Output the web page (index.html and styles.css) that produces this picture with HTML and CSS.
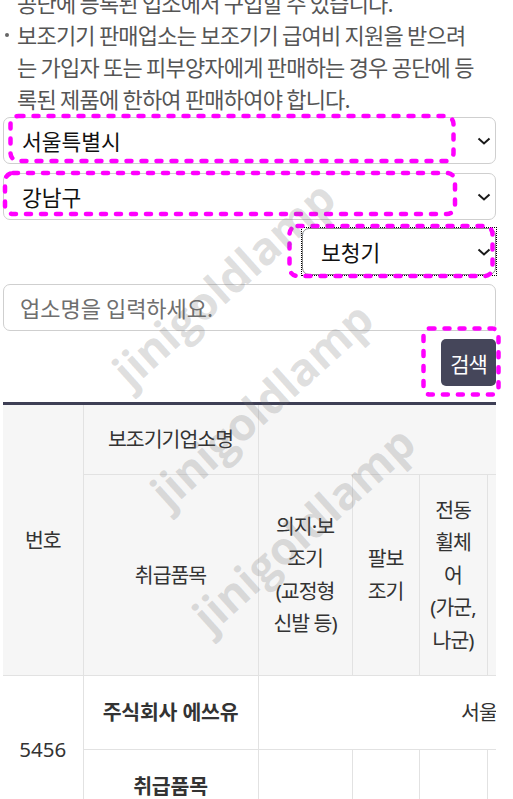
FILE: index.html
```html
<!DOCTYPE html>
<html>
<head>
<meta charset="utf-8">
<title>보조기기 판매업소 찾기</title>
<link rel="stylesheet" href="styles.css">
</head>
<body>
<div class="page">
  <p class="notice-cont">공단에 등록된 업소에서 구입할 수 있습니다.</p>
  <ul class="notice">
    <li>보조기기 판매업소는 보조기기 급여비 지원을 받으려는 가입자 또는 피부양자에게 판매하는 경우 공단에 등록된 제품에 한하여 판매하여야 합니다.</li>
  </ul>

  <form class="search">
    <div class="select-wrap">
      <select class="select"><option>서울특별시</option></select>
      <svg class="chev" width="14" height="8" viewBox="0 0 14 8"><path d="M1.5 1.5 L7 6.5 L12.5 1.5" fill="none" stroke="#1a1a1a" stroke-width="2"/></svg>
    </div>
    <div class="select-wrap">
      <select class="select"><option>강남구</option></select>
      <svg class="chev" width="14" height="8" viewBox="0 0 14 8"><path d="M1.5 1.5 L7 6.5 L12.5 1.5" fill="none" stroke="#1a1a1a" stroke-width="2"/></svg>
    </div>
    <div class="select-wrap select-wrap--short">
      <select class="select select--focus"><option>보청기</option></select>
      <svg class="chev" width="14" height="8" viewBox="0 0 14 8"><path d="M1.5 1.5 L7 6.5 L12.5 1.5" fill="none" stroke="#1a1a1a" stroke-width="2"/></svg>
    </div>
    <input class="text-input" type="text" placeholder="업소명을 입력하세요.">
    <div class="actions"><button class="btn" type="button">검색</button></div>
  </form>

  <div class="table-wrap">
    <table class="list">
      <colgroup>
        <col class="c-no"><col class="c-name"><col class="c-w94"><col class="c-w67">
        <col class="c-w68"><col class="c-w68"><col class="c-w68"><col class="c-w68">
        <col class="c-w68"><col class="c-w68"><col class="c-w68">
      </colgroup>
      <thead>
        <tr>
          <th rowspan="2" class="first">번호</th>
          <th>보조기기업소명</th>
          <th colspan="9">주소</th>
        </tr>
        <tr>
          <th>취급품목</th>
          <th class="item item--wide">의지&#8288;·&#8288;보조기 (교정형 신발 등)</th>
          <th class="item">팔보조기</th>
          <th class="item">전동휠체어 (가군, 나군)</th>
          <th class="item">수동휠체어</th>
          <th class="item">전동스쿠터</th>
          <th class="item">자세보조용구</th>
          <th class="item">보청기</th>
          <th class="item">돋보기</th>
          <th class="item">기타</th>
        </tr>
      </thead>
      <tbody>
        <tr>
          <td rowspan="2" class="first num">5456</td>
          <td class="strong">주식회사 에쓰유</td>
          <td colspan="9">서울특별시 강남구 논현로 12</td>
        </tr>
        <tr>
          <td class="strong">취급품목</td>
          <td></td><td></td><td></td><td></td><td></td><td></td>
          <td>○</td><td></td><td></td>
        </tr>
      </tbody>
    </table>
  </div>

  <svg class="marks" width="513" height="799" viewBox="0 0 513 799">
    <rect x="10.5" y="116" width="443" height="45" rx="8"/>
    <rect x="5" y="173" width="450" height="41" rx="8"/>
    <rect x="289.5" y="226" width="203" height="50" rx="8"/>
    <rect x="423.5" y="328.5" width="75" height="66" rx="6"/>
  </svg>

  <span class="wm wm-1">jinigoldlamp</span>
  <span class="wm wm-2">jinigoldlamp</span>
  <span class="wm wm-3">jinigoldlamp</span>
</div>
</body>
</html>
```

FILE: styles.css
```css
* { box-sizing: border-box; }

html, body {
  margin: 0;
  padding: 0;
  background: #fff;
}

body {
  font-family: "Noto Sans CJK KR", "Noto Sans", sans-serif;
  overflow: hidden;
}

.page {
  position: relative;
  display: flow-root;
  width: 513px;
  height: 799px;
  padding: 0 17px 0 3px;
  overflow: hidden;
}

.notice-cont,
.notice {
  font-size: 22px;
  letter-spacing: -0.8px;
  line-height: 32px;
  color: #555;
}

.notice-cont {
  margin: -14px 12px 0 0;
  padding-left: 14px;
}

.notice {
  list-style: none;
  margin: 0 12px 0 0;
  padding: 0;
}

.notice li {
  display: flex;
}

.notice li::before {
  content: "";
  flex: none;
  width: 4px;
  height: 4px;
  border-radius: 50%;
  background: #666;
  margin: 15px 8px 0 2px;
}

.search {
  display: flex;
  flex-direction: column;
  gap: 8.5px;
  margin: 3px 0 0;
}

.select-wrap {
  position: relative;
  height: 47px;
}

.select-wrap--short {
  align-self: flex-end;
  width: 194px;
  outline: 1px dotted #000;
  outline-offset: 0;
}

.select {
  appearance: none;
  -webkit-appearance: none;
  display: block;
  width: 100%;
  height: 47px;
  margin: 0;
  padding: 0 40px 0 18px;
  border: 1px solid #cfcfcf;
  border-radius: 7px;
  background: #fff;
  font-family: "Noto Sans CJK KR", "Noto Sans", sans-serif;
  font-size: 21.5px;
  color: #111;
}

.select--focus {
  border-color: #8a8a8a;
}

.chev {
  position: absolute;
  right: 5px;
  top: 20px;
  pointer-events: none;
}

.text-input {
  display: block;
  width: 100%;
  height: 47px;
  margin: 0;
  padding: 0 16px;
  border: 1px solid #cfcfcf;
  border-radius: 7px;
  font-family: "Noto Sans CJK KR", "Noto Sans", sans-serif;
  font-size: 22px;
  color: #222;
}

.text-input::placeholder {
  color: #6f6f6f;
}

.actions {
  display: flex;
  justify-content: flex-end;
}

.btn {
  width: 55px;
  height: 47px;
  padding: 0;
  border: 0;
  border-radius: 5px;
  background: #45465a;
  color: #fff;
  font-family: "Noto Sans CJK KR", "Noto Sans", sans-serif;
  font-size: 21px;
  letter-spacing: -1px;
}

.table-wrap {
  margin-top: 16px;
  border-top: 3px solid #3e3f55;
  overflow: hidden;
}

.list {
  border-collapse: collapse;
  table-layout: fixed;
  width: 892px;
  font-family: "Noto Sans", "Noto Sans CJK KR", sans-serif;
  font-size: 20.5px;
  letter-spacing: -1px;
  line-height: 32.5px;
  color: #333;
  word-break: keep-all;
  overflow-wrap: anywhere;
}

.c-no { width: 80px; }
.c-name { width: 175px; }
.c-w94 { width: 94px; }
.c-w67 { width: 67px; }
.c-w68 { width: 68px; }

.list th,
.list td {
  border: 1px solid #e2e2e2;
  text-align: center;
  vertical-align: middle;
  padding: 18px 10px;
}

.list th {
  background: #f6f6f6;
  font-weight: 400;
}

.list th.item {
  padding: 19px 8px;
}

.list th.item--wide {
  padding: 19px 12px;
}

.list td {
  padding: 20px 10px;
  background: #fff;
}

.list thead tr:first-child th {
  border-top: 0;
}

.list .first {
  border-left: 0;
}

.list .num {
  letter-spacing: 0;
}

.list .strong {
  font-weight: 700;
  letter-spacing: -0.2px;
}

.marks {
  position: absolute;
  left: 0;
  top: 0;
  pointer-events: none;
}

.marks rect {
  fill: none;
  stroke: #ff00ff;
  stroke-width: 4.5;
  stroke-dasharray: 5 10;
  stroke-linecap: round;
}

.wm {
  position: absolute;
  font-family: "Open Sans", "Liberation Sans", sans-serif;
  font-weight: 700;
  font-size: 45px;
  line-height: 1;
  color: rgba(110, 110, 110, 0.22);
  white-space: nowrap;
  pointer-events: none;
  transform: translate(-50%, -50%) rotate(-42deg);
}

.wm-1 { left: 223px; top: 283px; }
.wm-2 { left: 261px; top: 404px; }
.wm-3 { left: 303px; top: 528px; }
```
